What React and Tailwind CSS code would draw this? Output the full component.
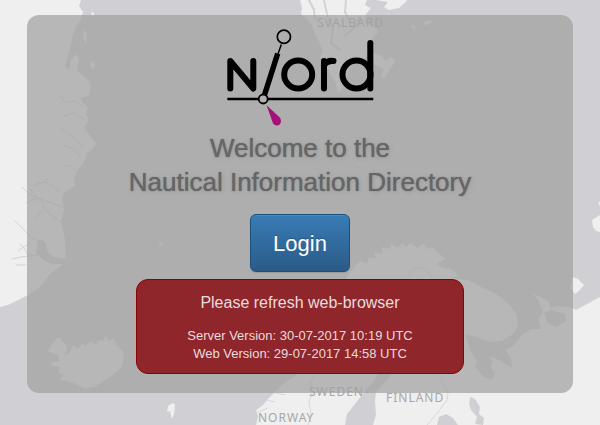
function MapBackground() {
  return (
    <svg
      className="absolute inset-0 h-full w-full"
      viewBox="0 0 600 425"
      preserveAspectRatio="xMidYMid slice"
      aria-hidden="true"
    >
      <rect width="600" height="425" fill="#d0cfd4" />
      <g fill="#efefef">
        {/* Greenland */}
        <path d="M0 0H81L79 6L83 12L80 22L76 26L73 34L71 44L68 56L65 66L69 70L71 60L76 54L79 60L77 70L83 76L88 80L91 86L89 96L80 98L84 104L88 108L86 114L89 120L84 128L91 137L96 143L92 150L87 153L84 162L78 170L74 178L75 186L65 192L62 197L64 210L61 222L65 240L66 256L62 265L50 274L40 287L28 295L18 300L8 305L0 307Z" />
        <path d="M91 12l3 1l0 5l-2-2zM92 60l3 4l-2 5l-3-3zM84 30l3 3l-1 10l-3-4z" />
        {/* Iceland */}
        <path d="M47 351L52 344L56 339L60 337L62 341L66 344L67 350L64 356L69 353L73 345L78 349L82 343L86 346L90 341L95 345L99 340L104 341L105 335L109 341L114 338L116 345L122 350L124 357L122 366L117 372L110 377L102 382L94 387L84 388L76 384L66 381L59 380L64 375L58 372L60 367L53 366L50 363L59 361L59 356Z" />
        {/* Svalbard */}
        <path d="M300 0L302 8L301 14L307 19L312 26L315 34L320 44L323 51L320 58L325 65L330 74L336 83L338 94L344 86L347 76L350 67L355 62L360 62L366 57L369 45L374 36L379 31L373 26L365 23L366 14L371 8L365 5L367 0Z" />
        <path d="M376 0L388 2L384 7L389 10L399 8L406 2L407 0ZM372 52L382 56L386 61L391 57L396 61L390 69L385 78L381 77L384 69L374 64Z" />
        <path d="M411 24l5 3l-2 3zM422 24l6-4l5 2l-7 3z" />
        {/* Scandinavia and Russia */}
        <path d="M256 425L258 416L256 410L263 405L268 399L276 391L285 382L294 377L304 366L315 352L322 334L327 317L332 306L337 292L344 282L350 272L356 265L360 261L367 264L369 257L376 259L374 252L383 254L381 247L390 249L391 244L397 248L403 243L406 247L411 243L417 248L424 243L426 249L432 247L438 252L445 259L437 264L444 268L451 269L459 276L451 278L468 280L481 287L496 294L509 304L517 315L518 326L513 334L502 341L489 342L477 337L465 334L467 340L470 349L476 360L488 370L493 362L489 356L499 360L512 368L511 358L505 350L513 346L522 335L531 329L541 329L538 320L543 312L538 300L533 294L541 297L549 302L551 310L544 313L548 323L556 327L566 321L565 314L555 311L547 308L558 306L569 307L576 310L587 304L600 297V425Z" />
        <path d="M573 277l5 2l6 6l-5 6l-4 3l-5-6zM592 220l8-5v17l-4-1l-3-4zM600 206l-2-3l2-2zM159 244l5-2l-5 5zM168 406l5-3l2 2l-1 9l-2 5l-2-8l-3 1zM358 162l2 1l-1 2z" />
      </g>
      <g fill="#d0cfd4">
        {/* Baltic, White Sea inlets and the lakes */}
        <path d="M345 425L347 414L355 404L365 391L373 382L379 372L391 370L389 378L382 385L376 392L375 400L376 415L373 425Z" />
        <path d="M437 425L439 417L446 414L453 418L458 425ZM470 397L475 399L480 407L479 414L484 418L483 425L475 424L477 417L471 410L469 404Z" />
        <path d="M479 357l10 8l6 8l-3 7l-8-3l-9-10z" />
        <path d="M38 240L45 242L48 252L54 257L66 259L64 264L53 264L43 260L36 253Z" />
      </g>
      <g fill="none" stroke="#d3d2d6" strokeWidth="1" strokeLinecap="round" strokeLinejoin="round">
        <path d="M15 221L22 228L28 234L35 240L43 241M12 259L21 257L29 256L38 255M16 265L26 265M18 251L24 247L30 243M20 244L25 249L28 256M22 187L29 194L38 198L46 201L62 207M26 203L34 199L42 201L44 208L52 216L62 222M36 196L30 189M42 211L36 219" />
        <path d="M34 185L44 182L50 184L60 192M44 182L48 178M61 129L68 134L75 138L82 146M63 167L70 165L76 171M60 96L66 103L74 101L83 106M64 116L74 113L84 119M63 145L73 149L80 156" />
      </g>
      <g fill="none" stroke="#d3d2d6" strokeWidth="2" strokeLinecap="round" strokeLinejoin="round">
        <path d="M309 0L314 10L315 19M324 0L327 14L333 29L331 43L340 50M346 0L345 12L350 22M360 17L354 28L345 36" />
      </g>
      <g fill="none" stroke="#d8d8d9" strokeWidth="1">
        <path d="M315 375L310 384L312 393L309 402L311 414L308 425M408 277L413 269L423 267L432 277L430 302L437 324L435 353L439 376L448 393L447 400L438 412L427 425M258 412L268 408M267 400L275 402M276 393L285 395" />
      </g>
      <g
        fill="#a7a7a9"
        fontFamily="'Noto Sans', 'Open Sans', sans-serif"
        fontSize="12"
        letterSpacing="1"
      >
        <text x="317" y="27">SVALBARD</text>
        <text x="309" y="396">SWEDEN</text>
        <text x="386" y="402">FINLAND</text>
        <text x="258" y="422">NORWAY</text>
      </g>
    </svg>
  );
}

function Logo() {
  return (
    <svg className="h-25 w-[150px]" viewBox="225 28 150 100" role="img" aria-label="Njord">
      <g fill="none" stroke="#000" strokeWidth="6" strokeLinecap="round" strokeLinejoin="round">
        <path d="M230.3 88.5V61L253.3 88.5V61" />
        <circle cx="298.2" cy="74.5" r="14" />
        <path d="M324 88.5V61M324 65C327 61 330 60.5 333.5 61" />
        <circle cx="356.5" cy="74.5" r="14" />
        <path d="M370.3 43V88.5" />
      </g>
      <path d="M264 96.5L277.7 53.5" fill="none" stroke="#000" strokeWidth="5.5" />
      <path d="M278 54L281.3 44.5" fill="none" stroke="#000" strokeWidth="1.5" />
      <circle cx="283.9" cy="36.8" r="6.6" fill="none" stroke="#000" strokeWidth="1.7" />
      <path d="M227.3 99H373.3" stroke="#000" strokeWidth="2.3" />
      <circle cx="263.2" cy="99" r="4.5" fill="#b0b0b0" stroke="#000" strokeWidth="1.8" />
      <path
        d="M266.6 105.2L279.6 117.2C282.3 120.5 281 125.3 277 125.5C274.5 125.5 273.2 124 272.5 122Z"
        fill="#a5117b"
      />
    </svg>
  );
}

export default function App() {
  return (
    <div className="relative min-h-screen overflow-hidden px-[27px] py-[15px] font-['Liberation_Sans',Arial,sans-serif]">
      <MapBackground />
      <main className="relative flex flex-col items-center rounded-xl bg-[#a1a1a1]/72 pt-[13px] pb-[19px] text-center">
        <Logo />
        <h1 className="mt-[3px] text-[26px] leading-[34px] font-medium text-[#666] [text-shadow:0_0_1px_#666,1px_1px_4px_#999]">
          Welcome to the
          <br />
          Nautical Information Directory
        </h1>
        <button
          type="button"
          className="mt-[15px] h-[58px] w-[100px] rounded-md border border-[#1b527d] bg-linear-to-b from-[#387cb6] to-[#2b5b87] text-[22px] text-white shadow-[inset_0_1px_0_#4b87b8,0_1px_1px_#999] [text-shadow:0_-1px_0_#285780]"
        >
          Login
        </button>
        <section
          role="alert"
          className="mt-[7px] w-3/5 rounded-xl border border-[#8b0000] bg-[#8f262b] pt-[11px] pb-[10px] text-[13px] leading-[18px] text-[#eadcdd]"
        >
          <h2 className="text-base">Please refresh web-browser</h2>
          <p className="mt-3">
            Server Version: 30-07-2017 10:19 UTC
            <br />
            Web Version: 29-07-2017 14:58 UTC
          </p>
        </section>
      </main>
    </div>
  );
}
